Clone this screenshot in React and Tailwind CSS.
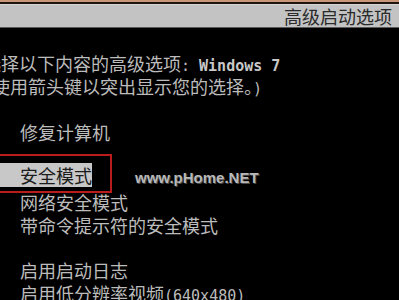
export default function App() {
  const mono = "font-['DejaVu_Sans_Mono',monospace] text-[15px] leading-none";
  const row = "h-[23px] leading-[23px]";
  return (
    <div className="relative w-[399px] h-[300px] overflow-hidden bg-black font-['Noto_Sans_CJK_SC',sans-serif]">
      {/* top strips */}
      <div className="h-[2px] bg-[#c99679]" />
      <div className="h-[2px] bg-[#1e140e]" />
      <div className="h-[23px] bg-[#c3c3c3] border-t border-[#d6d6d6] flex items-center justify-end pr-[7px]">
        <span className="text-[18px] leading-[22px] text-[#2a2a2a]">高级启动选项</span>
      </div>
      <div className="h-[1px] bg-[#5a5a5a]" />

      {/* body */}
      <div className="pt-[24px] pl-[20px] text-[18px] text-[#bcbcbc] whitespace-nowrap">
        <div className={`${row} -ml-[37px]`}>
          选择以下内容的高级选项<span className={mono}>: </span>
          <span className={`${mono} font-bold text-[#c8c8c8]`}>Windows 7</span>
        </div>
        <div className={`${row} -ml-[37px]`}>
          <span className={mono}>(</span>使用箭头键以突出显示您的选择。<span className={mono}>)</span>
        </div>
        <div className="h-[23px]" />
        <div className={row}>修复计算机</div>
        <div className="h-[19px]" />
        <div className="-ml-[20px] pl-[20px] w-[92px] h-[24px] leading-[24px] bg-[#c8c8c8] text-[#1c1c1c]">
          安全模式
        </div>
        <div className={`${row} mt-[4px]`}>网络安全模式</div>
        <div className={row}>带命令提示符的安全模式</div>
        <div className="h-[22px]" />
        <div className={row}>启用启动日志</div>
        <div className="h-[22px] leading-[22px]">
          启用低分辨率视频<span className={mono}>(640x480)</span>
        </div>
      </div>

      {/* red annotation box */}
      <div className="absolute left-[-10px] top-[154px] w-[122px] h-[39px] border-2 border-[#b81c1c]" />

      {/* watermark */}
      <div className="absolute left-[135px] top-[168px] font-['Liberation_Sans',sans-serif] font-bold text-[15px] leading-[20px] text-[#b8b8b8] [text-shadow:1px_1px_0_#4a4a4a]">
        www.pHome.NET
      </div>
    </div>
  );
}
